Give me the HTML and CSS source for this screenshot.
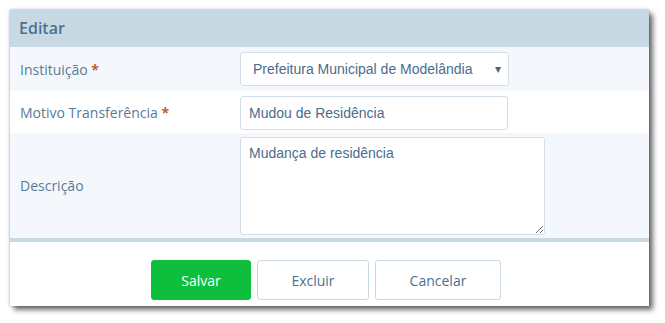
FILE: index.html
```html
<!DOCTYPE html>
<html lang="pt">
<head>
    <meta charset="UTF-8">
    <title>Editar</title>
    <link rel="stylesheet" href="styles.css">
</head>
<body>
    <div class="painel">
        <div class="cabecalho">Editar</div>

        <div class="linha escura">
            <label class="rotulo" for="instituicao">Instituição <span class="obrig">*</span></label>
            <div class="campo">
                <div class="select" id="instituicao">
                    <span>Prefeitura Municipal de Modelândia</span>
                    <span class="seta">&#9662;</span>
                </div>
            </div>
        </div>

        <div class="linha">
            <label class="rotulo" for="motivo">Motivo Transferência <span class="obrig">*</span></label>
            <div class="campo">
                <input type="text" id="motivo" class="entrada" value="Mudou de Residência">
            </div>
        </div>

        <div class="linha escura alta">
            <label class="rotulo" for="descricao">Descrição</label>
            <div class="campo">
                <textarea id="descricao" class="texto">Mudança de residência</textarea>
            </div>
        </div>

        <div class="rodape">
            <button class="botao verde">Salvar</button>
            <button class="botao">Excluir</button>
            <button class="botao largo">Cancelar</button>
        </div>
    </div>
</body>
</html>
```
FILE: styles.css
```css
body {
    margin: 0;
    padding: 10px;
    background: #fff;
    font-family: "Open Sans", sans-serif;
}
.painel {
    width: 639px;
    height: 296px;
    background: #fff;
    box-shadow: 4px 4px 5px rgba(0,0,0,0.55), 0 0 3px rgba(0,0,0,0.35);
    display: flex;
    flex-direction: column;
}
.cabecalho {
    height: 37px;
    background: #c9d9e4;
    color: #4a7190;
    font-size: 16px;
    font-weight: 600;
    padding-left: 9px;
    line-height: 36px;
}
.linha {
    display: flex;
    align-items: center;
    height: 42px;
}
.linha.escura {
    background: #f4f8fc;
}
.linha:nth-child(2) {
    height: 44px;
}
.linha.alta {
    height: 105px;
    border-bottom: 4px solid #c9d9e4;
}
.rotulo {
    width: 220px;
    padding-left: 10px;
    font-size: 14px;
    color: #5a7b95;
}
.obrig {
    color: #c0602a;
    font-weight: bold;
}
.campo {
    flex: 1;
}
.select {
    width: 248px;
    height: 32px;
    border: 1px solid #d3dfe8;
    border-radius: 3px;
    background: #fff;
    display: flex;
    align-items: center;
    justify-content: space-between;
    padding: 0 7px 0 12px;
    font-family: "Liberation Sans", Arial, sans-serif;
    font-size: 14px;
    color: #4a6d8c;
}
.seta {
    font-size: 12px;
    color: #3f6585;
}
.entrada {
    box-sizing: border-box;
    width: 268px;
    height: 34px;
    border: 1px solid #d3dfe8;
    border-radius: 3px;
    padding: 0 8px;
    font-family: "Liberation Sans", Arial, sans-serif;
    font-size: 14px;
    color: #4a6d8c;
    margin-top: 2px;
}
.texto {
    box-sizing: border-box;
    display: block;
    width: 305px;
    height: 98px;
    border: 1px solid #d3dfe8;
    border-radius: 3px;
    padding: 7px 8px;
    font-family: "Liberation Sans", Arial, sans-serif;
    font-size: 14px;
    color: #4a6d8c;
    resize: vertical;
    margin-top: 1px;
}
.rodape {
    flex: 1;
    display: flex;
    justify-content: center;
    align-items: center;
    gap: 6px;
    padding-top: 18px;
    padding-bottom: 6px;
    padding-right: 7px;
}
.botao {
    width: 112px;
    height: 40px;
    border: 1px solid #c9d9e4;
    border-radius: 3px;
    background: #fff;
    color: #4a7190;
    font-family: "Open Sans", sans-serif;
    font-size: 14px;
    cursor: pointer;
}
.botao.verde {
    width: 100px;
    background: #0dbf3d;
    border-color: #0dbf3d;
    color: #fff;
}
.botao.largo {
    width: 126px;
}
```
